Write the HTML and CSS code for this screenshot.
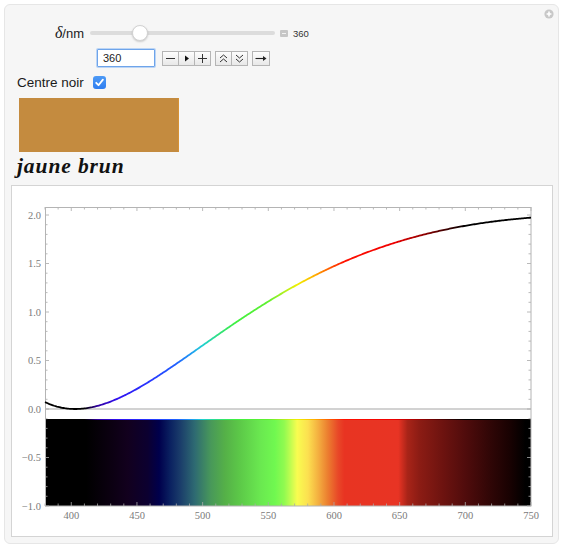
FILE: index.html
```html
<!DOCTYPE html>
<html lang="fr">
<head>
<meta charset="utf-8">
<title>Teinte de polarisation</title>
<link rel="stylesheet" href="styles.css">
</head>
<body>
<div class="panel">
  <span class="plus-icon"><svg width="10" height="10" viewBox="0 0 10 10"><circle cx="5" cy="5" r="4.6" fill="#c8c8c8"/><path d="M5 2.6v4.8M2.6 5h4.8" stroke="#fff" stroke-width="1.6"/></svg></span>

  <div class="slider-row">
    <span class="slider-label"><i class="delta">δ</i>/nm</span>
    <div class="track"><span class="thumb"></span></div>
    <span class="mini-icon"></span>
    <span class="slider-value">360</span>
  </div>

  <div class="controls-row">
    <input class="num" type="text" value="360" readonly>
    <div class="btn-group first">
      <span class="btn"><svg width="15" height="13" viewBox="0 0 15 13"><path d="M3 6.5h9" stroke="#333" stroke-width="1"/></svg></span>
      <span class="btn"><svg width="15" height="13" viewBox="0 0 15 13"><path d="M6 3.5L10 6.5L6 9.5Z" fill="#111"/></svg></span>
      <span class="btn"><svg width="15" height="13" viewBox="0 0 15 13"><path d="M3 6.5h9M7.5 2v9" stroke="#333" stroke-width="1"/></svg></span>
    </div>
    <div class="btn-group">
      <span class="btn"><svg width="15" height="13" viewBox="0 0 15 13"><path d="M4 6L7.5 3L11 6M4 10L7.5 7L11 10" fill="none" stroke="#333" stroke-width="1"/></svg></span>
      <span class="btn"><svg width="15" height="13" viewBox="0 0 15 13"><path d="M4 3L7.5 6L11 3M4 7L7.5 10L11 7" fill="none" stroke="#333" stroke-width="1"/></svg></span>
    </div>
    <div class="btn-group">
      <span class="btn wide"><svg width="16" height="13" viewBox="0 0 16 13"><path d="M2.5 6.5h10" stroke="#222" stroke-width="1.1"/><path d="M10 4L13.5 6.5L10 9Z" fill="#222"/></svg></span>
    </div>
  </div>

  <div class="check-row">
    <span class="check-label">Centre noir</span>
    <span class="checkbox"><svg width="13" height="13" viewBox="0 0 13 13"><path d="M3.2 6.8L5.5 9.2L9.9 3.6" fill="none" stroke="#fff" stroke-width="1.8" stroke-linecap="round" stroke-linejoin="round"/></svg></span>
  </div>

  <div class="swatch"></div>
  <div class="colour-name">jaune brun</div>

  <div class="plot">
    <svg id="plot-svg" class="plot-svg" width="540" height="350" viewBox="12 186 540 350">
      <defs>
        <linearGradient id="bandGrad" gradientUnits="userSpaceOnUse" x1="45" y1="0" x2="531" y2="0">
          <stop offset="0" stop-color="#000000"/>
          <stop offset="0.085" stop-color="#000000"/>
          <stop offset="0.130" stop-color="#0a000f"/>
          <stop offset="0.170" stop-color="#12001e"/>
          <stop offset="0.211" stop-color="#0c0030"/>
          <stop offset="0.235" stop-color="#00004c"/>
          <stop offset="0.257" stop-color="#0a2060"/>
          <stop offset="0.278" stop-color="#1a3c6a"/>
          <stop offset="0.308" stop-color="#2e6a72"/>
          <stop offset="0.341" stop-color="#48985a"/>
          <stop offset="0.370" stop-color="#55b048"/>
          <stop offset="0.400" stop-color="#5cc848"/>
          <stop offset="0.443" stop-color="#6ae850"/>
          <stop offset="0.473" stop-color="#70f850"/>
          <stop offset="0.492" stop-color="#90fa50"/>
          <stop offset="0.505" stop-color="#c0fc50"/>
          <stop offset="0.519" stop-color="#f8fc50"/>
          <stop offset="0.541" stop-color="#fce050"/>
          <stop offset="0.562" stop-color="#f4b040"/>
          <stop offset="0.581" stop-color="#ec8030"/>
          <stop offset="0.603" stop-color="#e84828"/>
          <stop offset="0.616" stop-color="#e83422"/>
          <stop offset="0.727" stop-color="#e83424"/>
          <stop offset="0.746" stop-color="#a82418"/>
          <stop offset="0.770" stop-color="#8c1c14"/>
          <stop offset="0.814" stop-color="#701410"/>
          <stop offset="0.865" stop-color="#500c0c"/>
          <stop offset="0.916" stop-color="#300606"/>
          <stop offset="0.957" stop-color="#180202"/>
          <stop offset="0.989" stop-color="#000000"/>
          <stop offset="1" stop-color="#000000"/>
        </linearGradient>
        <linearGradient id="curveGrad" gradientUnits="userSpaceOnUse" x1="45" y1="0" x2="531" y2="0">
          <stop offset="0" stop-color="#000000"/>
          <stop offset="0.081" stop-color="#000000"/>
          <stop offset="0.108" stop-color="#3000a0"/>
          <stop offset="0.149" stop-color="#3010f0"/>
          <stop offset="0.216" stop-color="#2838ff"/>
          <stop offset="0.270" stop-color="#2060ff"/>
          <stop offset="0.303" stop-color="#20a0f0"/>
          <stop offset="0.324" stop-color="#20d0d0"/>
          <stop offset="0.357" stop-color="#30e080"/>
          <stop offset="0.392" stop-color="#40f040"/>
          <stop offset="0.459" stop-color="#60f030"/>
          <stop offset="0.492" stop-color="#b0f020"/>
          <stop offset="0.519" stop-color="#f0f000"/>
          <stop offset="0.554" stop-color="#ffb000"/>
          <stop offset="0.589" stop-color="#ff5000"/>
          <stop offset="0.616" stop-color="#ff1000"/>
          <stop offset="0.716" stop-color="#f00000"/>
          <stop offset="0.770" stop-color="#a00000"/>
          <stop offset="0.824" stop-color="#400000"/>
          <stop offset="0.865" stop-color="#000000"/>
          <stop offset="1" stop-color="#000000"/>
        </linearGradient>
      </defs>

      <rect x="45" y="419" width="486" height="87" fill="url(#bandGrad)"/>
      <line x1="45" y1="419.5" x2="531" y2="419.5" stroke="url(#curveGrad)" stroke-width="1"/>
      <line x1="45" y1="409" x2="531" y2="409" stroke="#d2d2d2" stroke-width="2"/>
      <path id="ticks" class="ticks" d=""/>
      <rect class="frame" x="45.5" y="207.5" width="485.5" height="298.5"/>
      <path id="curve" class="curve" d=""/>

      <g class="labels">
        <text x="41" y="218.5" text-anchor="end">2.0</text>
        <text x="41" y="267" text-anchor="end">1.5</text>
        <text x="41" y="315.5" text-anchor="end">1.0</text>
        <text x="41" y="364" text-anchor="end">0.5</text>
        <text x="41" y="412.5" text-anchor="end">0.0</text>
        <text x="41" y="461" text-anchor="end">−0.5</text>
        <text x="41" y="509.5" text-anchor="end">−1.0</text>
        <text x="71.3" y="519" text-anchor="middle">400</text>
        <text x="137" y="519" text-anchor="middle">450</text>
        <text x="202.6" y="519" text-anchor="middle">500</text>
        <text x="268.3" y="519" text-anchor="middle">550</text>
        <text x="334" y="519" text-anchor="middle">600</text>
        <text x="399.7" y="519" text-anchor="middle">650</text>
        <text x="465.3" y="519" text-anchor="middle">700</text>
        <text x="531" y="519" text-anchor="middle">750</text>
      </g>
    </svg>
  </div>
</div>
<script src="script.js"></script>
</body>
</html>
```

FILE: styles.css
```css
* { box-sizing: border-box; }
html, body { margin: 0; background: #ffffff; }
body { font-family: "Liberation Sans", Arial, sans-serif; color: #222; }

.panel {
  position: relative;
  margin: 4px 0 0 4px;
  width: 555px;
  height: 540px;
  background: #f6f6f6;
  border: 1px solid #e6e6e6;
  border-radius: 6px;
}
.plus-icon { position: absolute; top: 4px; right: 4px; width: 10px; height: 10px; line-height: 0; }

.slider-row { display: flex; align-items: center; height: 18px; margin-top: 19px; }
.slider-label { width: 79px; text-align: right; font-size: 13px; color: #222; white-space: nowrap; }
.delta { font-family: "Liberation Serif", serif; font-style: italic; font-size: 16px; }
.track { position: relative; margin-left: 6px; width: 185px; height: 4px; border-radius: 2px; background: #dcdcdc; }
.thumb {
  position: absolute; left: 42px; top: -6px; width: 16px; height: 16px; border-radius: 50%;
  background: #fff; border: 1px solid #d2d2d2; box-shadow: 0 1px 2px rgba(0,0,0,0.18);
}
.mini-icon { position: relative; margin-left: 5px; width: 8px; height: 7px; background: #c6c6c6; border-radius: 1px; }
.mini-icon::after { content: ""; position: absolute; left: 2px; right: 2px; top: 3px; height: 1px; background: #f2f2f2; }
.slider-value { margin-left: 5px; font-size: 9.5px; color: #333; }

.controls-row { display: flex; align-items: center; height: 18px; margin: 7px 0 0 92px; }
.num {
  width: 58px; height: 18px; margin: 0; padding: 0 0 0 5px;
  border: 1px solid #6ea4ea; border-radius: 1px; box-shadow: 0 0 0 1px #bcd5f5;
  background: #fff; color: #222; font: 11px "Liberation Sans", Arial, sans-serif; outline: none;
}
.btn-group {
  display: flex; height: 15px; margin-left: 4px;
  border: 1px solid #b5b5b5; background: linear-gradient(#fdfdfd, #e8e8e8);
}
.btn-group.first { margin-left: 7px; }
.btn { display: flex; align-items: center; justify-content: center; width: 16px; height: 13px; border-left: 1px solid #b5b5b5; }
.btn:first-child { width: 15px; border-left: 0; }
.btn.wide { width: 16px; }

.check-row { display: flex; align-items: center; height: 16px; margin: 7px 0 0 12px; }
.check-label { font-size: 13.5px; color: #1a1a1a; }
.checkbox {
  display: flex; margin-left: 9px; width: 13px; height: 13px; border-radius: 3px;
  background: linear-gradient(#4d9af6, #2f7ef0); line-height: 0;
}

.swatch { margin: 8px 0 0 14px; width: 160px; height: 54px; background: #c48b3f; border-right: 1px solid #d69236; }
.colour-name {
  margin: 1px 0 0 12px; height: 26px; line-height: 26px;
  font-family: "Liberation Serif", "Times New Roman", serif; font-weight: bold; font-style: italic;
  font-size: 21.5px; letter-spacing: 0.9px; color: #111;
}

.plot { margin: 6px 0 0 6px; width: 542px; height: 352px; background: #fff; border: 1px solid #d4d4d4; }
.plot-svg { display: block; }
.frame { fill: none; stroke: #b4b4b4; stroke-width: 1; }
.ticks { fill: none; stroke: #a8a8a8; stroke-width: 0.8; }
.curve { fill: none; stroke: url(#curveGrad); stroke-width: 1.8; stroke-linejoin: round; }
.labels text { font-family: "Liberation Serif", "Times New Roman", serif; font-size: 10.5px; fill: #7a7a7a; }
```

FILE: script.js
```js
(function () {
  function px(l) { return 45 + (l - 380) * 486 / 370; }
  function py(v) { return 409 - 97 * v; }

  var d = '';
  for (var l = 380; l <= 750; l += 10) {
    var x = px(l).toFixed(2);
    var len = (l % 50 === 0) ? 4 : 2.5;
    d += 'M' + x + ' 207v' + len + 'M' + x + ' 506v-' + len;
  }
  for (var i = -10; i <= 20; i++) {
    var y = py(i / 10).toFixed(2);
    var ln = (i % 5 === 0) ? 4 : 2.5;
    d += 'M45 ' + y + 'h' + ln + 'M531 ' + y + 'h-' + ln;
  }
  document.getElementById('ticks').setAttribute('d', d);

  var c = '';
  for (var w = 380; w <= 750; w += 1) {
    var s = Math.sin(Math.PI * 403 / w);
    var v = 2 * s * s;
    c += (w === 380 ? 'M' : 'L') + px(w).toFixed(2) + ' ' + py(v).toFixed(2);
  }
  document.getElementById('curve').setAttribute('d', c);
})();
```
